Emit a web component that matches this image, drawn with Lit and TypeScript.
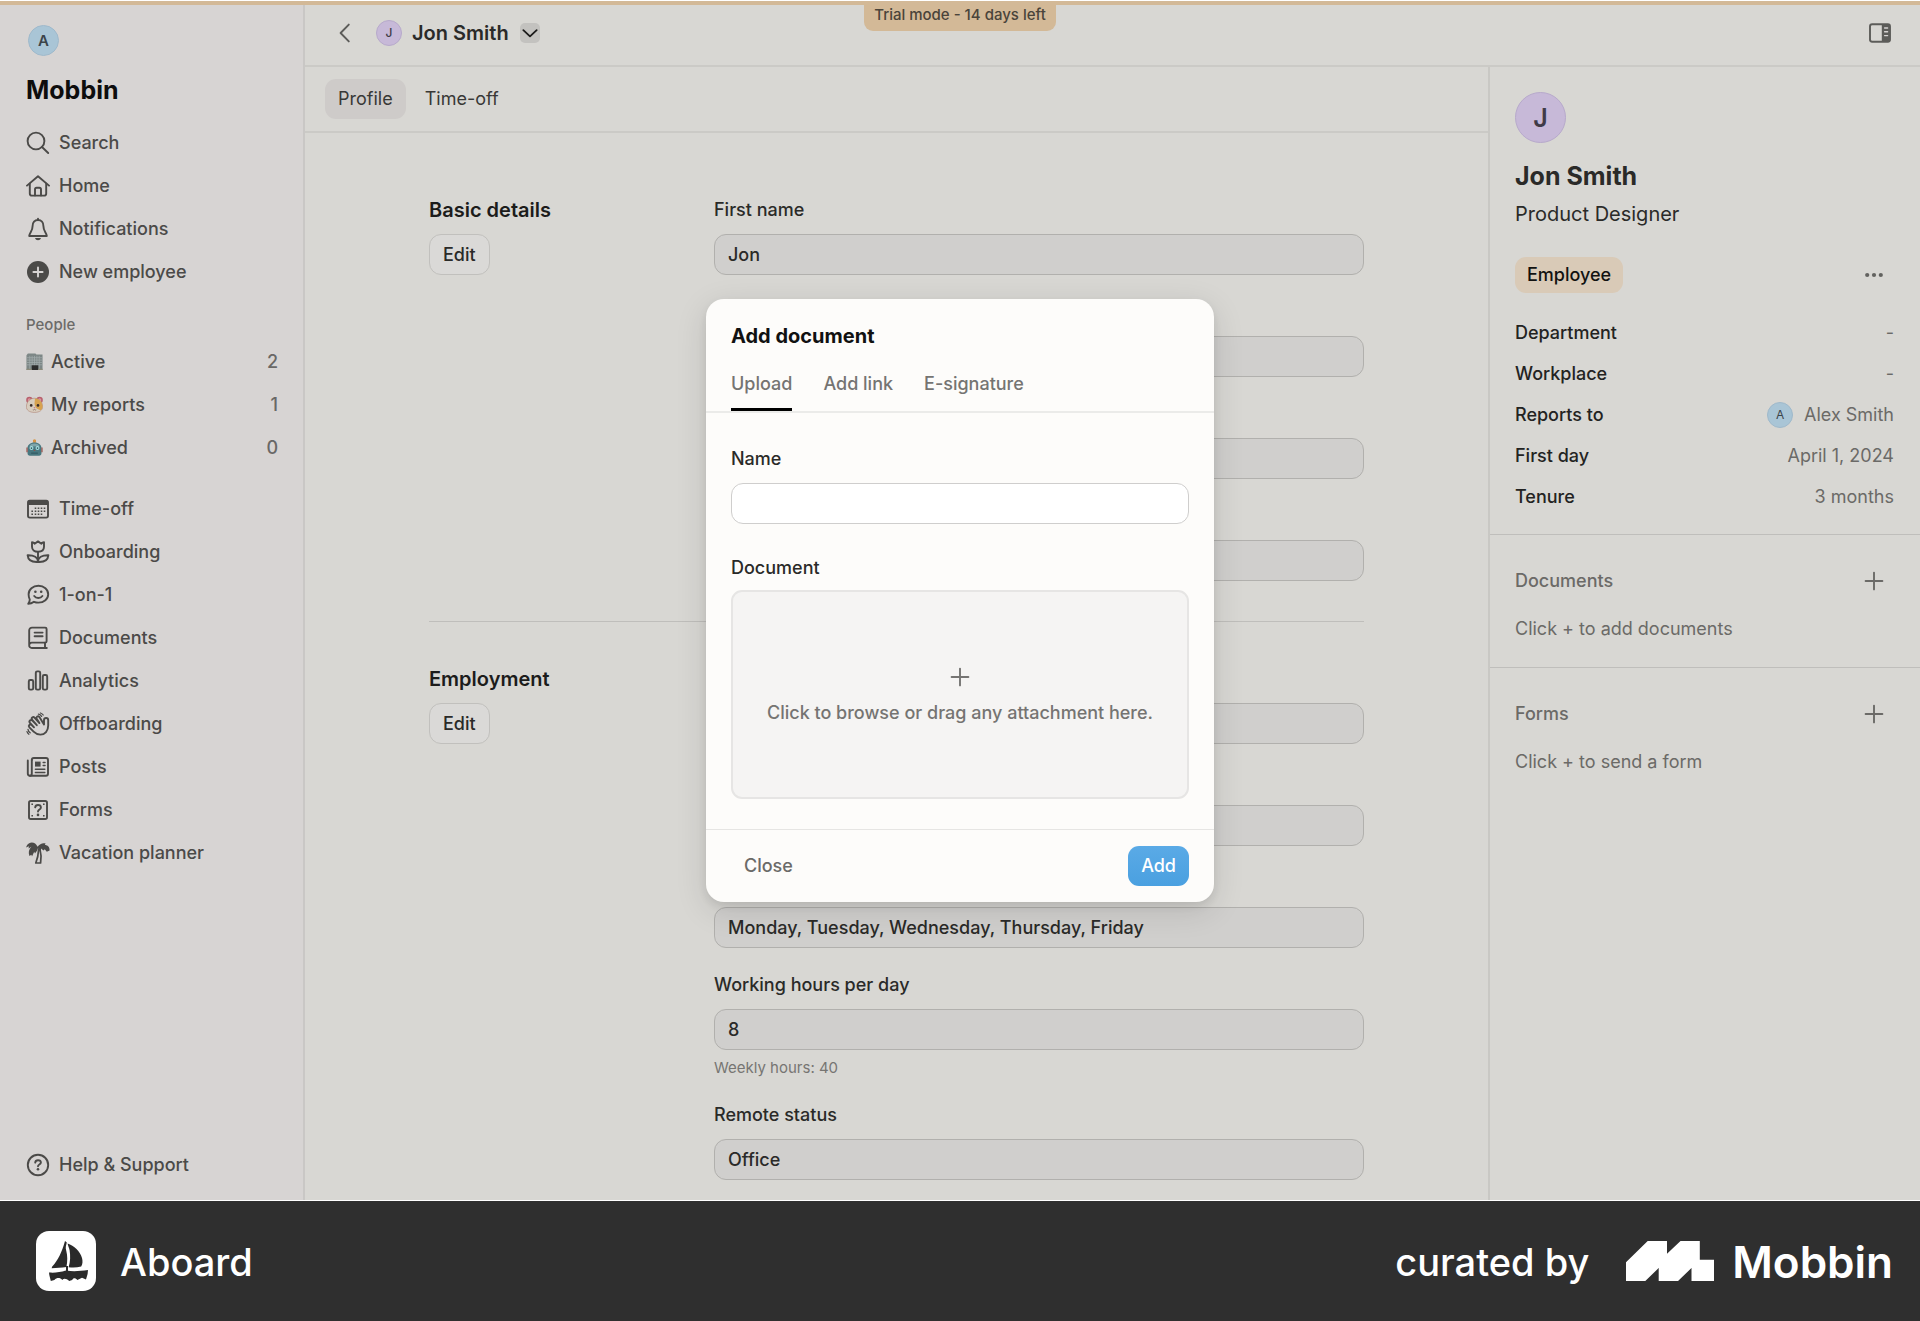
import { LitElement, html, svg, css, nothing } from "lit";
import { customElement, property } from "lit/decorators.js";

const icons: Record<string, unknown> = {
  search: svg`<circle cx="10" cy="10" r="8.4"/><path d="M16 16l6.2 6"/>`,
  home: svg`<path d="M1 11.6L12 2.2l11 9.4"/><path d="M3.8 9.8v9.6a2.2 2.2 0 0 0 2.2 2.2h12a2.2 2.2 0 0 0 2.2-2.2V9.8"/><path d="M9 21.4v-6a1.6 1.6 0 0 1 1.6-1.6h2.8a1.6 1.6 0 0 1 1.6 1.6v6"/>`,
  bell: svg`<path d="M12 1.6v1.4"/><path d="M12 3C8.600 3 6.600 5.600 6.600 9c0 5.200-2.800 6.400-3.400 10h17.600c-.6-3.600-3.400-4.800-3.400-10 0-3.400-2-6-5.400-6z"/><path class="fill" d="M9 21h6c-.5 1.500-1.600 2.200-3 2.200S9.500 22.500 9 21z"/>`,
  plusCircle: svg`<circle class="fill" cx="12" cy="12" r="11"/><path class="cut" d="M12 7.400v9.200M7.400 12h9.200"/>`,
  calendar: svg`<rect x="2" y="3.600" width="20" height="17" rx="1.800"/><path class="fill" d="M2 8V5a2 2 0 0 1 2-2h16a2 2 0 0 1 2 2v3z"/><path class="dots" d="M9.500 11.200h0M12.500 11.200h0M15.500 11.200h0M18.500 11.200h0M6.200 14.200h0M9.500 14.200h0M12.500 14.200h0M15.500 14.200h0M18.500 14.200h0M6.200 17.200h0M9.500 17.200h0M12.500 17.200h0M15.500 17.200h0"/>`,
  flower: svg`<path d="M6 2.200c1.200.1 2 .7 2.600 1.600L12 1.400l3.400 2.400c.6-.9 1.400-1.500 2.600-1.600v4.600c0 3.200-2.400 5-6 5s-6-1.800-6-5z"/><path d="M12 12v10"/><path d="M12 22c0-4.600-4-7-10.400-6.800C2 19.800 5.800 22.400 12 22zM12 22c0-4.600 4-7 10.400-6.800C22 19.800 18.200 22.400 12 22z"/>`,
  chat: svg`<path d="M12.400 2.800c5.600 0 9.800 3.600 9.800 8.400s-4.200 8.400-9.800 8.400c-1.600 0-3.100-.3-4.400-.8-1.600 1.200-3.600 2-5.800 2 1-1.200 1.600-2.600 1.600-4.200-.8-1.500-1.200-3.300-1.200-5.400 0-4.800 4.200-8.400 9.800-8.400z"/><path d="M8.200 13c1.800 2.600 6.400 2.600 8.200 0"/><path class="eyes" d="M9.400 8.800h0M15.200 8.800h0"/>`,
  book: svg`<path d="M3.200 18.800V4.400a2.800 2.800 0 0 1 2.800-2.800h13.200a1.400 1.400 0 0 1 1.400 1.400v12.200a1.400 1.400 0 0 1-1.400 1.400H5.800a2.600 2.600 0 0 0-2.600 2.600 2.600 2.600 0 0 0 2.600 2.800h15"/><path d="M19 16.600V22M8.600 6.600h8M8.600 10.200h8"/>`,
  bars: svg`<rect x="2.800" y="11" width="4.400" height="9.600" rx="1.400"/><rect x="9.800" y="2.400" width="4.400" height="18.200" rx="1.400"/><rect x="16.800" y="6" width="4.400" height="14.600" rx="1.400"/>`,
  wave: svg`<path d="M18 12.400V8.200c0-3 4.200-3 4.200 0v5.400c0 5.200-3.200 9-7.800 9-3 0-4.800-1-6.800-3l-4.200-4.200c-1.600-1.800.6-3.800 2.300-2.300l2.300 2.200-4-4.300c-1.600-1.800.7-4 2.400-2.300l4.400 4.500-4.600-5.200c-1.500-1.900.9-4 2.500-2.200l4.700 5.200-2.700-4.300c-1-2 1.400-3.400 2.700-1.700z"/><path d="M12.400 2.200c1.400.2 2.400 1 3.200 2.200M14.400 1c1.400.4 2.200 1 2.800 2M2 17.400c.2 1.600 1 2.600 2.200 3.400M1 19.600c.4 1.200 1 2 1.900 2.600" stroke-width="1.300"/>`,
  news: svg`<path d="M5.800 5a2 2 0 0 1 2-2H20a2 2 0 0 1 2 2v13.800a2 2 0 0 1-2 2H4a2.200 2.200 0 0 1-2.200-2.200V5.400"/><path d="M5.800 5v13.600c0 1.300-.7 2.200-1.800 2.200"/><path class="fill" d="M9 6.600h5.600v5H9z"/><path d="M17.200 7.400h1.800M17.200 10.600h1.800M9.400 14.200h9.400M9.400 17.400h9.400" stroke-width="1.500"/>`,
  form: svg`<rect x="3" y="3" width="18" height="18" rx="1.800"/><path d="M9.200 9.400C9.400 7.600 10.500 7 12 7c1.700 0 2.900.9 2.900 2.400 0 2.200-2.900 2-2.900 4.200"/><path class="eyes" d="M12 16.900h0"/><path class="dots" d="M6.200 6.200h0M17.800 6.200h0M6.200 17.800h0M17.800 17.800h0"/>`,
  palm: svg`<path class="fill" d="M11.600 5.800C10 2.200 6.400.6 3.200 2.200 1.600 3 .4 4.600.2 6.400l2.600-1.200-.2 2.200 2.800-1.600c-2.600 2.600-3.200 5.400-2 9.200l2-1.200.6 1.600 2.200-4.600.8 1.600c1.600-1.600 2.400-3.200 2.800-4.800l3 1.800.4-2 2.200 2.200 1.400-1.400 2 2.600 2.800-1.400c.2-3.200-1.800-5.400-4.800-5.400l.8-1.600c-3-.8-5.800.2-8 3.400z"/><path d="M12.600 8.600c-.2 4.600-1 8.800-2.800 13.400h4.800c.8-4.800.6-9.200-.6-13.400z" stroke-width="1.700"/>`,
  help: svg`<circle cx="12" cy="12" r="10.200"/><path d="M9.200 9.600C9.400 7.800 10.500 7.200 12 7.200c1.700 0 2.900.9 2.900 2.400 0 2-2.900 1.800-2.900 3.600"/><path class="eyes" d="M12 16.300h0"/>`,
  back: svg`<path d="M15.800 3.600L7.600 12l8.200 8.400"/>`,
  down: svg`<path d="M4 8.600l8 7.400 8-7.400" stroke-width="2.200"/>`,
  panel: svg`<rect x="2" y="3.200" width="20" height="17.600" rx="2.200"/><path class="fill" d="M13.800 3.200H20a2 2 0 0 1 2 2v13.600a2 2 0 0 1-2 2h-6.200z"/><path class="cut" d="M16.600 7h3M16.600 10.800h3M16.600 14.600h3" stroke-width="1.400"/>`,
  plus: svg`<path d="M12 3.600v16.800M3.600 12h16.800"/>`,
  dots: svg`<circle class="fill" cx="5.200" cy="12" r="2.100"/><circle class="fill" cx="12" cy="12" r="2.100"/><circle class="fill" cx="18.800" cy="12" r="2.100"/>`,
};

const emoji: Record<string, unknown> = {
  office: svg`<path fill="#7d8786" d="M.5 2.500L2 .6h8l1 1h6.500v16.400H.5z"/><path stroke="#a2adad" stroke-width=".8" d="M1 5h16.500M1 7.500h16.500M1 10h16.500M1 12.500h16.500M4 3v14M6.500 3v14M9 3v14M11.500 3v14M14 3v14"/><path fill="#2c2d2c" d="M6 13h7v5H6z"/><path fill="#8d8a78" d="M.5 16.800H6V18H.5zM13 16.800h4.500V18H13z"/>`,
  hamster: svg`<circle cx="3.600" cy="4.200" r="3.400" fill="#b8606c"/><circle cx="14.400" cy="4.200" r="3.400" fill="#b8606c"/><circle cx="3.600" cy="4.200" r="1.800" fill="#dc94a0"/><circle cx="14.400" cy="4.200" r="1.800" fill="#dc94a0"/><path fill="#d8cdbf" stroke="#a5705f" stroke-width=".5" d="M9 2.400c4.700 0 8 3.200 8.600 8.200.5 4.200-3.200 6.800-8.600 6.800S-.1 14.800.4 10.600C1 5.600 4.300 2.400 9 2.400z"/><path fill="#d7a24f" d="M9.500 2.600c4.500.2 7.500 3.200 8 8 .2 1.800-.5 3.300-1.800 4.400-4.300-.7-6.300-3.200-6.700-7z"/><circle cx="5.500" cy="10" r="1.400" fill="#3a2d28"/><circle cx="12.700" cy="10" r="1.400" fill="#3a2d28"/><path fill="#c4697a" d="M7.900 12h2.200L9 13.300z"/><path stroke="#7d5b4f" stroke-width=".7" fill="none" d="M7.200 14.600c.8.400 1.400.2 1.800-.6.400.8 1 1 1.800.6"/>`,
  robot: svg`<path fill="#c8893a" d="M7.600 1h2.800v3H7.600z"/><circle cx="9" cy="1.800" r="1.600" fill="#d99544"/><path fill="#48777f" d="M9 3.600c4.600 0 7.400 2.600 7.400 6v5.600c0 1.600-1 2.600-2.600 2.600H4.200c-1.600 0-2.600-1-2.600-2.600V9.600c0-3.400 2.800-6 7.400-6z"/><path fill="#9b5750" d="M.4 9h1.400v5H.4zM16.200 9h1.400v5h-1.400z"/><path fill="#7fa5aa" d="M3.400 8c.8-2 2.800-3.200 5.600-3.200S13.800 6 14.600 8z"/><circle cx="5.800" cy="9.600" r="2.100" fill="#a9e0e2"/><circle cx="12.200" cy="9.600" r="2.100" fill="#a9e0e2"/><circle cx="5.800" cy="9.600" r=".9" fill="#31545b"/><circle cx="12.200" cy="9.600" r=".9" fill="#31545b"/><path fill="#8d5149" d="M9 10.800l1 1.800H8z"/><path fill="#376069" d="M5.400 14.200h7.200v1.600H5.400z"/>`,
};

@customElement("ui-icon")
export class UiIcon extends LitElement {
  @property() name = "";
  static styles = css`
    :host { display: inline-flex; flex: none; width: 24px; height: 24px; }
    svg { width: 100%; height: 100%; fill: none; stroke: currentColor; stroke-width: 1.9; stroke-linecap: round; stroke-linejoin: round; }
    .fill { fill: currentColor; stroke: none; }
    .cut { stroke: #d7d4d3; }
    .dots { stroke-width: 1.6; stroke-linecap: square; }
    .eyes { stroke-width: 2.6; }
  `;
  render() {
    return html`<svg viewBox="0 0 24 24" aria-hidden="true">${icons[this.name]}</svg>`;
  }
}

type Field = { id: string; label: string; value: string; hint?: string; covered?: boolean };

const topNav = [["search", "Search"], ["home", "Home"], ["bell", "Notifications"], ["plusCircle", "New employee"]];
const people = [["office", "Active", "2"], ["hamster", "My reports", "1"], ["robot", "Archived", "0"]];
const mainNav = [
  ["calendar", "Time-off"], ["flower", "Onboarding"], ["chat", "1-on-1"], ["book", "Documents"], ["bars", "Analytics"],
  ["wave", "Offboarding"], ["news", "Posts"], ["form", "Forms"], ["palm", "Vacation planner"],
];
const sections: { title: string; fields: Field[] }[] = [
  {
    title: "Basic details",
    fields: [
      { id: "first", label: "First name", value: "Jon" },
      { id: "last", label: "Last name", value: "Smith" },
      { id: "preferred", label: "Preferred name", value: "" },
      { id: "email", label: "Email", value: "" },
    ],
  },
  {
    title: "Employment",
    fields: [
      { id: "title", label: "Job title", value: "Product Designer" },
      { id: "start", label: "Start date", value: "April 1, 2024" },
      { id: "days", label: "Working days", value: "Monday, Tuesday, Wednesday, Thursday, Friday", covered: true },
      { id: "hours", label: "Working hours per day", value: "8", hint: "Weekly hours: 40" },
      { id: "remote", label: "Remote status", value: "Office" },
    ],
  },
];
const facts = [["Department", "-"], ["Workplace", "-"], ["Reports to", "Alex Smith"], ["First day", "April 1, 2024"], ["Tenure", "3 months"]];

@customElement("app-root")
export class AppRoot extends LitElement {
  static styles = css`
    :host { display: block; font-family: Inter, "Liberation Sans", sans-serif; font-size: 18px; line-height: 24px; font-weight: 450; color: #2a2a28; }
    * { box-sizing: border-box; }
    h1, h2, h3, p, dl, dd, dt, ul { margin: 0; padding: 0; font-size: inherit; font-weight: inherit; }
    ul { list-style: none; }
    a { color: inherit; text-decoration: none; }
    button, input { font: inherit; color: inherit; }
    button { border: 0; background: none; padding: 0; cursor: pointer; }

    .page { display: flex; flex-direction: column; min-height: 100vh; background: #fff; }
    .stage { position: relative; flex: 1; display: flex; margin: 1px 0; background: #d8d7d3; }

    .trial { position: absolute; top: 0; left: 0; right: 0; display: flex; justify-content: center; height: 4px; background: #d3b997; }
    .trial span { height: 30px; padding: 2px 10px 0; border-radius: 0 0 9px 9px; background: #d3b997; color: #4a443a; font-size: 15px; font-weight: 500; }

    .side { flex: none; display: flex; flex-direction: column; width: 305px; padding: 24px 25px 14px 26px; border-right: 2px solid #c9c7c5; background: #d7d4d3; color: #4b4a48; }
    .avatar { display: inline-flex; align-items: center; justify-content: center; flex: none; width: 26px; height: 26px; border: 1px solid #9fb9cb; border-radius: 50%; background: #a9c5d6; color: #3c444a; font-size: 12px; }
    .avatar.lilac { border-color: #b7a9cb; background: #c7b9d8; color: #403b47; }
    .avatar.mid { width: 31px; height: 31px; margin-left: 2px; font-size: 15px; font-weight: 600; }
    .avatar.large { width: 51px; height: 51px; font-size: 25px; font-weight: 600; }
    .brand { margin: 18px 0 15px; color: #0d0d0d; font-size: 25px; line-height: 32px; font-weight: 700; }
    .nav a { display: flex; align-items: center; gap: 9px; height: 43px; }
    .nav.people { margin-bottom: 18px; }
    .nav.people a { gap: 8px; }
    .nav.people svg { width: 17px; height: 17px; flex: none; }
    .nav .count { margin-left: auto; color: #696866; }
    .group { margin: 20px 0 3px; color: #6c6b69; font-size: 15px; font-weight: 500; line-height: 24px; }
    .help { margin-top: auto; }

    .work { flex: 1; min-width: 0; display: flex; flex-direction: column; }
    .top { display: flex; align-items: center; height: 66px; padding: 0 28px; border-bottom: 2px solid #cbcac6; }
    .top .back { display: flex; margin-right: 19px; color: #5c5c59; }
    .top h1 { margin: 0 11px 0 10px; font-size: 20px; font-weight: 600; }
    .top .more { display: flex; align-items: center; justify-content: center; width: 20px; height: 20px; border-radius: 5px; background: #c3c2bf; color: #1b1b1a; }
    .top .toggle { display: flex; margin-left: auto; color: #5c5c59; }
    .columns { flex: 1; display: flex; }
    .main { flex: 1; min-width: 0; }
    .tabs { display: flex; align-items: center; gap: 6px; height: 66px; padding: 0 20px; border-bottom: 2px solid #cbcac6; color: #383836; font-weight: 400; }
    .tabs button { height: 40px; padding: 0 13px; border-radius: 11px; }
    .tabs .on { background: #cecbc9; }
    .form { max-width: 983px; margin: 0 auto; padding: 65px 24px 19px; }
    .section { display: grid; grid-template-columns: 285px minmax(0, 1fr); }
    .section + .section { margin-top: 40px; padding-top: 45px; border-top: 1px solid #bfbebb; }
    .section h2 { margin-bottom: 12px; font-size: 20px; font-weight: 600; color: #1c1c1b; }
    .edit { height: 41px; padding: 0 13px; border: 1px solid #c1c0bd; border-radius: 12px; background: #dad9d7; }
    .fields { display: flex; flex-direction: column; gap: 25px; }
    .field { display: flex; flex-direction: column; gap: 12px; }
    .field .covered { visibility: hidden; }
    .field input { width: 100%; height: 41px; padding: 0 13px; border: 1px solid #b1b0ad; border-radius: 12px; background: #d0cfcd; outline: none; }
    .field p { margin-top: -4px; color: #767572; font-size: 15px; line-height: 20px; font-weight: 400; }

    .info { flex: none; width: 432px; border-left: 2px solid #c9c8c4; }
    .card { padding: 25px 26px 26px 25px; border-bottom: 1px solid #bfbebb; }
    .card h2 { margin-top: 17px; font-size: 25px; line-height: 32px; font-weight: 700; }
    .card h2 + p { margin-top: 9px; font-size: 20px; line-height: 26px; font-weight: 400; }
    .tag-row { display: flex; align-items: center; justify-content: space-between; margin: 30px 0 19px; padding-right: 8px; color: #62625f; }
    .tag { height: 36px; padding: 0 12px; border-radius: 11px; background: #d9cab7; color: #121211; line-height: 36px; }
    ui-icon.small { width: 20px; height: 20px; }
    .fact { display: flex; align-items: center; justify-content: space-between; min-height: 41px; color: #232322; }
    .fact dd { display: flex; align-items: center; gap: 11px; color: #6b6a67; font-weight: 400; }
    .card .facts { margin-bottom: -9px; }
    .list { padding: 34px 26px 26px 25px; border-bottom: 1px solid #bfbebb; color: #6b6a67; }
    .list:last-child { border-bottom: 0; }
    .list div { display: flex; align-items: center; justify-content: space-between; margin-bottom: 24px; padding-right: 8px; }
    .list p { font-weight: 400; }
    .info button { display: flex; }

    .overlay { position: absolute; inset: 0; display: flex; align-items: center; justify-content: center; }
    .dialog { width: 508px; border-radius: 18px; background: #fdfcfa; box-shadow: 0 8px 32px rgba(0, 0, 0, 0.12), 0 4px 8px rgba(0, 0, 0, 0.08); }
    .dialog header { padding: 23px 25px 0; border-bottom: 2px solid #ebebe9; }
    .dialog h2 { color: #111; font-size: 20px; line-height: 28px; font-weight: 700; }
    .dtabs { display: flex; gap: 31px; margin-top: 22px; color: #757472; }
    .dtabs button { padding-bottom: 12px; border-bottom: 3px solid transparent; }
    .dtabs .on { border-color: #000; }
    .body { display: flex; flex-direction: column; gap: 32px; padding: 34px 25px 30px; }
    .body .field input.text { border-color: #cfcecd; background: #fff; }
    .body .field.file { gap: 10px; }
    .drop { position: relative; display: flex; flex-direction: column; align-items: center; justify-content: center; gap: 12px; height: 209px; border: 2px solid #e6e5e4; border-radius: 11px; background: #f5f4f3; color: #757472; }
    .field .drop input { position: absolute; inset: 0; height: 100%; opacity: 0; }
    .dialog footer { display: flex; align-items: center; justify-content: space-between; padding: 16px 25px; border-top: 1px solid #e6e5e3; color: #6b6a68; }
    .dialog footer button { height: 40px; padding: 0 13px; border-radius: 11px; }
    .dialog footer .add { background: linear-gradient(#5aaae6, #4aa0e0); color: #fff; }

    .credit { display: flex; align-items: center; height: 120px; padding: 0 27px 0 36px; background: #2f2f2f; color: #fff; font-size: 38px; line-height: 48px; font-weight: 500; }
    .credit span { padding-top: 2px; }
    .boat { width: 60px; height: 60px; margin-right: 24px; }
    .by { margin-left: auto; }
    .mark { width: 88px; height: 40px; margin: 0 18px 0 37px; }
    .word { font-size: 44px; font-weight: 600; }
  `;

  private link([icon, text]: string[]) {
    return html`<li><a href="#"><ui-icon name=${icon}></ui-icon>${text}</a></li>`;
  }

  private field(f: Field) {
    return html`<div class="field">
      <label class=${f.covered ? "covered" : ""} for=${f.id}>${f.label}</label>
      <input id=${f.id} type="text" readonly .value=${f.value} />
      ${f.hint ? html`<p>${f.hint}</p>` : nothing}
    </div>`;
  }

  private sidebar() {
    return html`<aside class="side">
      <span class="avatar mid">A</span>
      <p class="brand">Mobbin</p>
      <ul class="nav">${topNav.map((n) => this.link(n))}</ul>
      <h2 class="group">People</h2>
      <ul class="nav people">
        ${people.map(([icon, text, count]) => html`<li><a href="#"><svg viewBox="0 0 18 18" aria-hidden="true">${emoji[icon]}</svg>${text}<span class="count">${count}</span></a></li>`)}
      </ul>
      <ul class="nav">${mainNav.map((n) => this.link(n))}</ul>
      <ul class="nav help">${this.link(["help", "Help & Support"])}</ul>
    </aside>`;
  }

  private info() {
    return html`<aside class="info">
      <div class="card">
        <span class="avatar lilac large">J</span>
        <h2>Jon Smith</h2>
        <p>Product Designer</p>
        <div class="tag-row">
          <span class="tag">Employee</span>
          <button aria-label="More actions"><ui-icon name="dots"></ui-icon></button>
        </div>
        <dl class="facts">
          ${facts.map(([k, v]) => html`<div class="fact"><dt>${k}</dt><dd>${k === "Reports to" ? html`<span class="avatar">A</span>` : nothing}${v}</dd></div>`)}
        </dl>
      </div>
      ${[["Documents", "Click + to add documents"], ["Forms", "Click + to send a form"]].map(([t, d]) => html`<section class="list">
        <div><h3>${t}</h3><button aria-label="Add to ${t}"><ui-icon name="plus"></ui-icon></button></div>
        <p>${d}</p>
      </section>`)}
    </aside>`;
  }

  private dialog() {
    return html`<div class="overlay"><div class="dialog" role="dialog" aria-labelledby="dialog-title">
      <header>
        <h2 id="dialog-title">Add document</h2>
        <div class="dtabs"><button class="on">Upload</button><button>Add link</button><button>E-signature</button></div>
      </header>
      <div class="body">
        <div class="field"><label for="name">Name</label><input class="text" id="name" type="text" /></div>
        <div class="field file">
          <label for="file">Document</label>
          <div class="drop"><ui-icon name="plus"></ui-icon><span>Click to browse or drag any attachment here.</span><input id="file" type="file" /></div>
        </div>
      </div>
      <footer><button>Close</button><button class="add">Add</button></footer>
    </div></div>`;
  }

  render() {
    return html`<div class="page">
      <div class="stage">
        ${this.sidebar()}
        <div class="work">
          <header class="top">
            <button class="back" aria-label="Back"><ui-icon name="back"></ui-icon></button>
            <span class="avatar lilac">J</span>
            <h1>Jon Smith</h1>
            <button class="more" aria-label="Switch employee"><ui-icon class="small" name="down"></ui-icon></button>
            <button class="toggle" aria-label="Toggle details"><ui-icon name="panel"></ui-icon></button>
          </header>
          <div class="columns">
            <main class="main">
              <nav class="tabs"><button class="on">Profile</button><button>Time-off</button></nav>
              <div class="form">
                ${sections.map((s) => html`<section class="section">
                  <div><h2>${s.title}</h2><button class="edit">Edit</button></div>
                  <div class="fields">${s.fields.map((f) => this.field(f))}</div>
                </section>`)}
              </div>
            </main>
            ${this.info()}
          </div>
        </div>
        <div class="trial"><span>Trial mode - 14 days left</span></div>
        ${this.dialog()}
      </div>
      <footer class="credit">
        <svg class="boat" viewBox="0 0 60 60" aria-hidden="true">
          <rect width="60" height="60" rx="13" fill="#fff"/>
          <path fill="#2a2a2a" d="M29 10l1.800 1.500c-.6 3-1.600 4.500-.6 8 1.400 5 1.400 11 .2 16.500-5 .5-10 1.200-14.800 1.300l.6-1.800c5.600-6 9.800-14.500 12.800-25.500zM31.600 12.400c6.400 2.400 12.600 7.600 14.400 14.600.8 3.200.8 6-.8 8.600-4.200 1-8.400 1.200-12.600.6 1.800-6 1.900-11 1-17-.4-2.400-1.600-4.400-2-6.800z"/>
          <path fill="#2a2a2a" d="M30 35h2v5h-2z"/>
          <path fill="#2a2a2a" d="M13 41.600c6 .4 11-.2 17-2 7 1 14 .6 22-.6l-.4 4-1.600 5.500-4-1.800-4.600 2.200c-2-2.200-4.200-2.300-5.200 0l-3 1c-2.500-2-5-3-7-1-2-2.400-5.400-2.400-7.800 0l-3.600 1c-.6-3-1.600-5-1.800-8.300z"/>
        </svg>
        <span>Aboard</span>
        <span class="by">curated by</span>
        <svg class="mark" viewBox="0 0 88 40" aria-hidden="true"><path fill="#fff" d="M0 21.300L21.700 0H41v12.700L54.500 0h19.300v18.700H88V40H65.500V27L52 40H32.700V27L19.300 40H0z"/></svg>
        <span class="word">Mobbin</span>
      </footer>
    </div>`;
  }
}
